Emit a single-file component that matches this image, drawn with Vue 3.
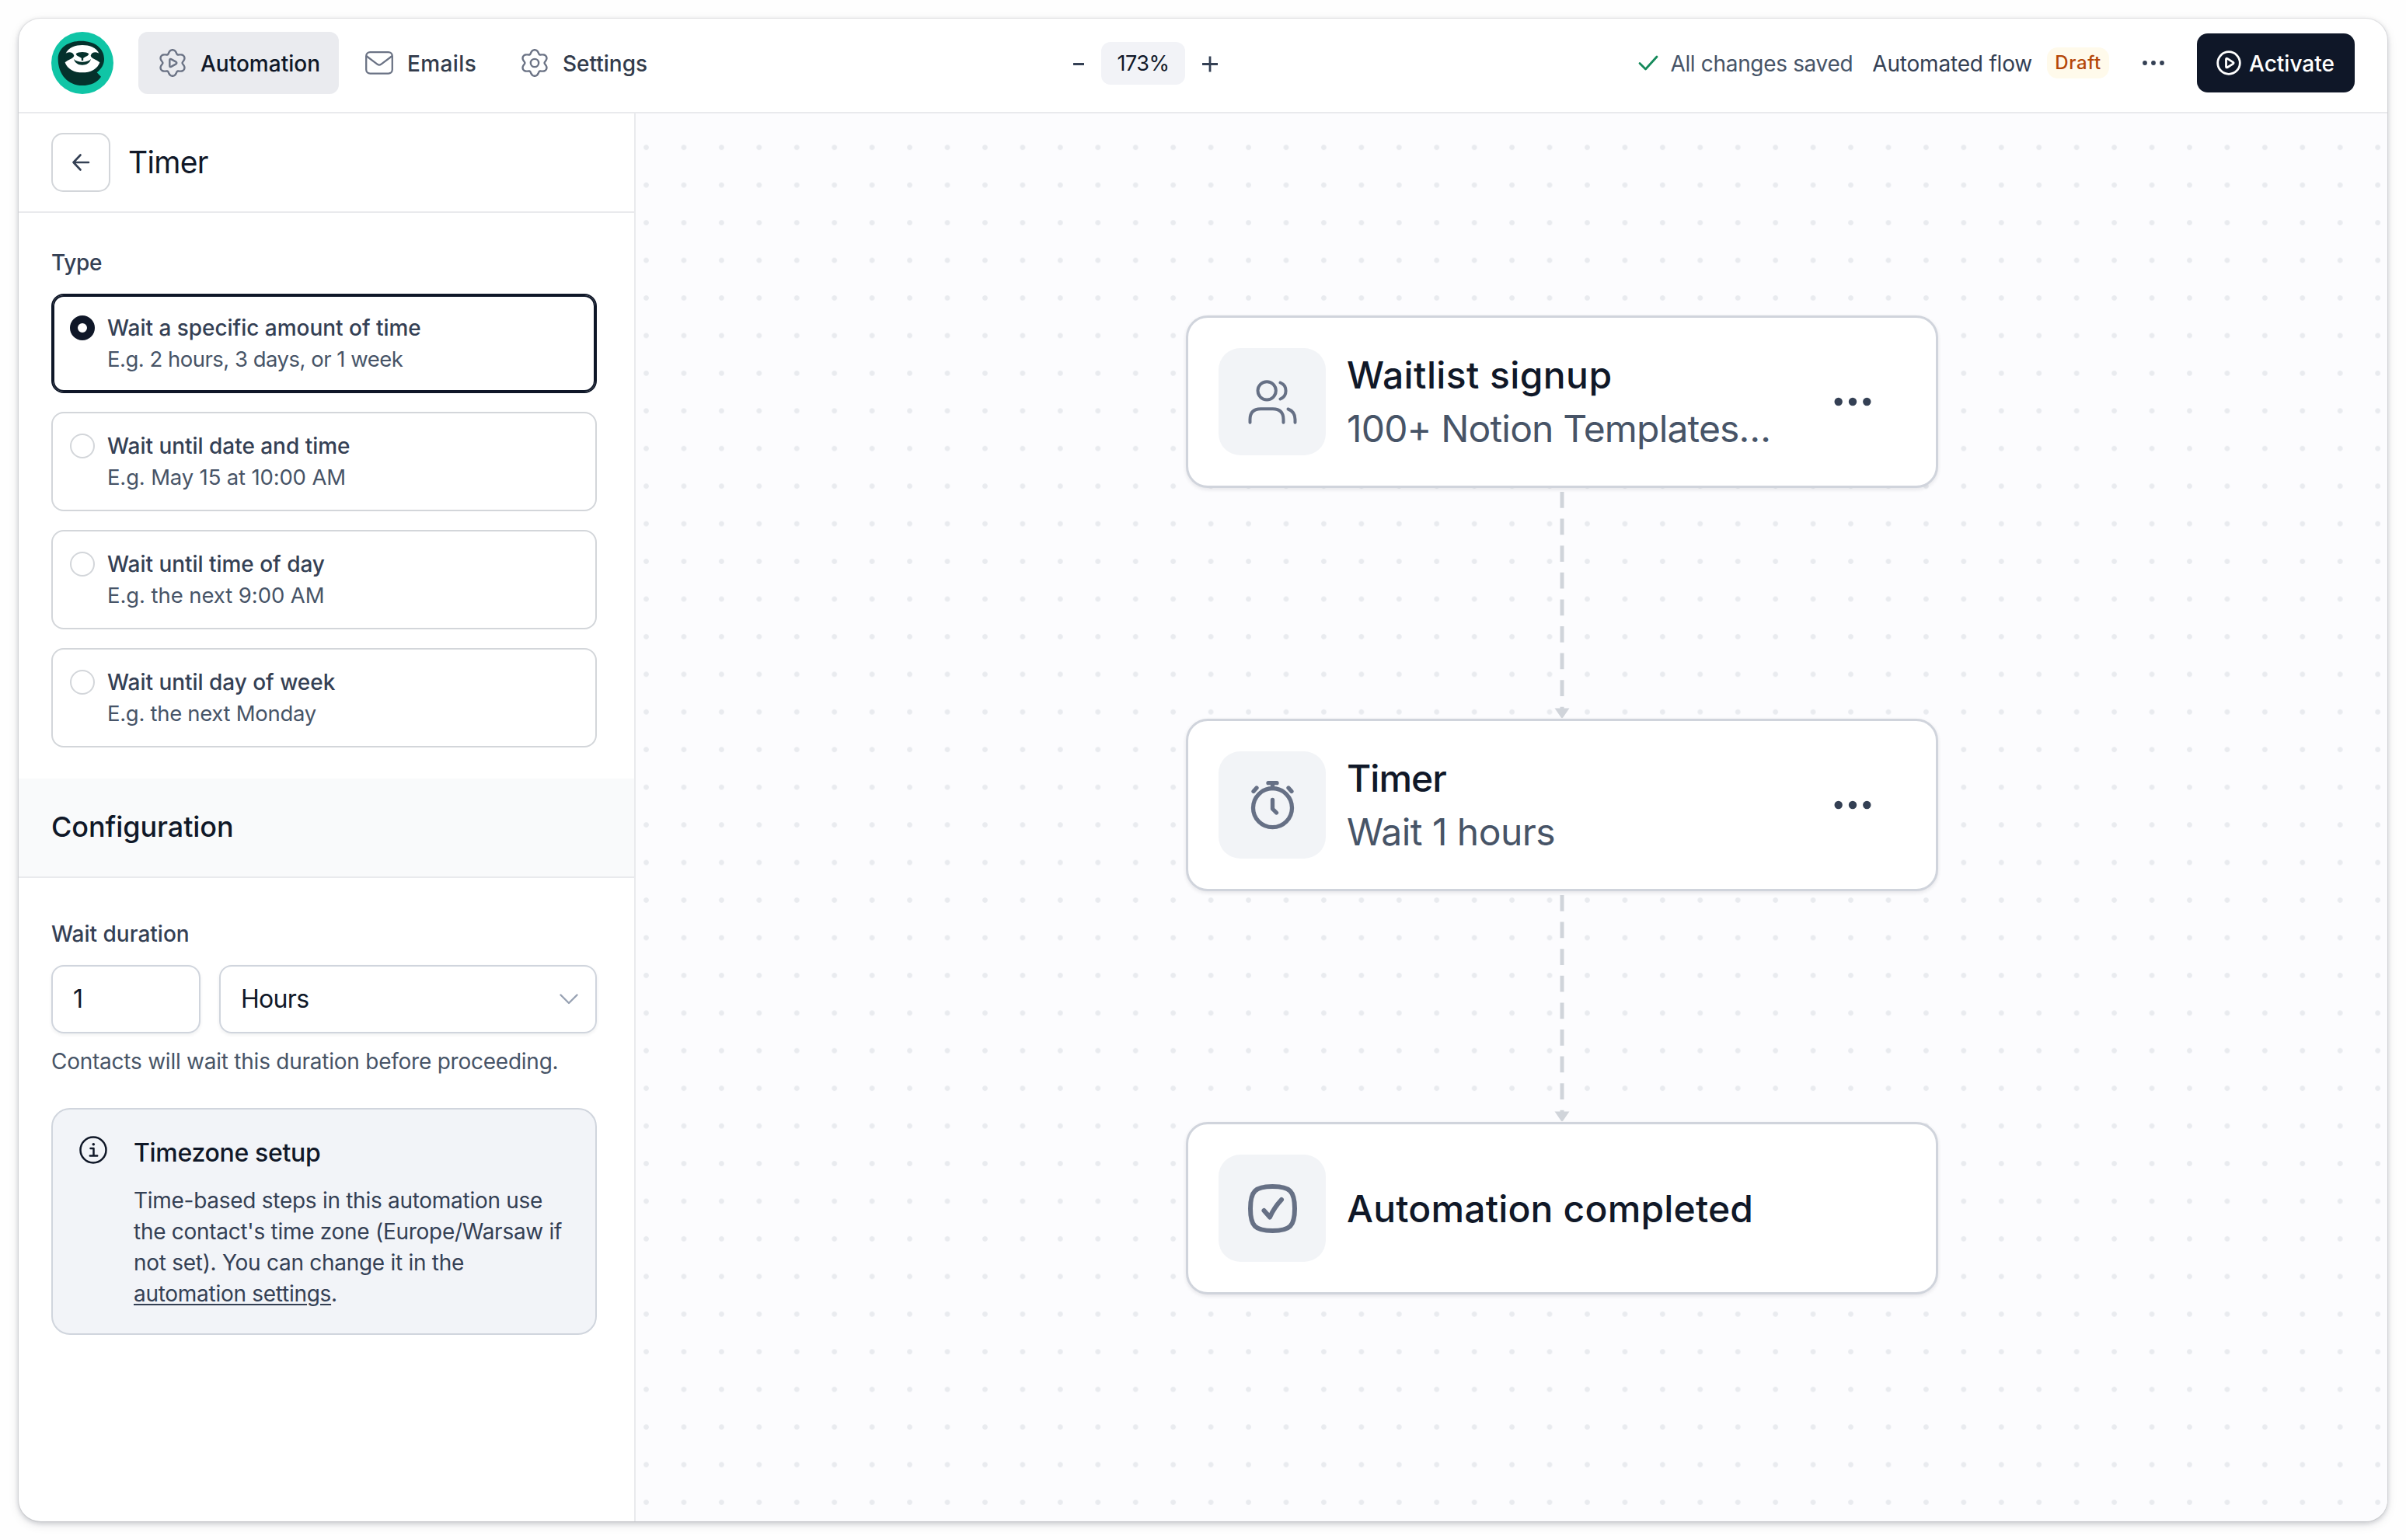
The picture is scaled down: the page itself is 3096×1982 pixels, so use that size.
<template>
  <div class="window">
    <header class="topbar">
      <div class="topbar-left">
        <svg class="logo" viewBox="0 0 240 240">
          <circle cx="120" cy="120" r="120" fill="#10c5a6" />
          <path
            d="M26 104C26 60 68 35 115 35C166 35 204 62 204 105C204 126 194 142 176 157L192 173C180 195 150 207 120 207C65 207 26 165 26 104Z"
            fill="#04312c"
          />
          <path
            d="M55 86C65 59 95 51 120 51C145 51 175 59 185 86L188 116C178 145 150 157 120 157C90 157 62 145 52 116Z"
            fill="#fff"
          />
          <path
            d="M48 90C60 75 84 75 88 92C85 104 70 103 50 120ZM192 90C180 75 156 75 152 92C155 104 170 103 190 120Z"
            fill="#04312c"
          />
          <path
            d="M95 85C104 76 136 76 145 85C143 95 129 96 123.500 102V111H116.500V102C111 96 97 95 95 85Z"
            fill="#04312c"
          />
          <path d="M87 105C101 120 139 120 153 105C149 121 135 128 120 128C105 128 91 121 87 105Z" fill="#04312c" />
        </svg>
        <nav class="tabs">
          <button class="tab tab-automation active">
            <svg class="tab-icon" viewBox="0 0 108 108">
              <path :d="gearPath" />
              <path d="M43 43v22q0 6 5.500 3.500l19-10.500q5-4 0-8l-19-10.500q-5.500-2.500-5.500 3.500Z" />
            </svg>
            <span>Automation</span>
          </button>
          <button class="tab tab-emails">
            <svg class="tab-icon mail" viewBox="0 0 36 36">
              <rect x="1.200" y="4.200" width="33.600" height="27.400" rx="5" />
              <path d="M2 9.500L15.800 19.800q2.200 1.500 4.400 0L34 9.500" />
            </svg>
            <span>Emails</span>
          </button>
          <button class="tab">
            <svg class="tab-icon" viewBox="0 0 108 108">
              <path :d="gearPath" />
              <circle cx="54" cy="54" r="15.500" />
            </svg>
            <span>Settings</span>
          </button>
        </nav>
      </div>

      <div class="zoom">
        <button class="zoom-btn zoom-out">
          <svg width="14" height="20" viewBox="0 0 14 20"><path d="M0 11.500h14" /></svg>
        </button>
        <div class="zoom-value"><span>{{ zoom }}%</span></div>
        <button class="zoom-btn zoom-in">
          <svg width="20" height="20" viewBox="0 0 20 20"><path d="M0 11.500h20M10 1.500v20" /></svg>
        </button>
      </div>

      <div class="topbar-right">
        <svg class="saved-icon" viewBox="0 0 26 20"><path d="M2 10.500L9.500 18L24 2" /></svg>
        <span class="saved">All changes saved</span>
        <span class="flow-name">Automated flow</span>
        <span class="badge">Draft</span>
        <button class="more">
          <svg width="30" height="8" viewBox="0 0 30 8">
            <circle cx="4" cy="4" r="2.900" />
            <circle cx="15" cy="4" r="2.900" />
            <circle cx="26" cy="4" r="2.900" />
          </svg>
        </button>
        <button class="activate">
          <svg viewBox="0 0 32 32">
            <circle cx="16" cy="16" r="14.300" />
            <path d="M12.500 11.300v9.400q0 1.800 1.600 1l7.400-4.600q1.300-1 0-2l-7.400-4.700q-1.600-.900-1.600.9Z" />
          </svg>
          <span>Activate</span>
        </button>
      </div>
    </header>

    <div class="body">
      <aside class="sidebar">
        <div class="sidebar-header">
          <button class="back">
            <svg viewBox="0 0 24 24"><path d="M22 12H2.500M11.500 2.500L2.500 12l9 9.500" /></svg>
          </button>
          <h1>Timer</h1>
        </div>

        <section class="type">
          <div class="label type-label">Type</div>
          <div class="options">
            <div
              v-for="opt in options"
              :key="opt.title"
              class="option"
              :class="{ selected: selected === opt.id }"
              @click="selected = opt.id"
            >
              <span class="radio"></span>
              <div>
                <div class="option-title">{{ opt.title }}</div>
                <div class="option-hint" :style="{ letterSpacing: opt.tracking + 'px' }">{{ opt.hint }}</div>
              </div>
            </div>
          </div>
        </section>

        <div class="section-title">Configuration</div>

        <section class="config">
          <div class="label">Wait duration</div>
          <div class="duration">
            <div class="field amount">{{ amount }}</div>
            <div class="field unit">
              <span>Hours</span>
              <svg viewBox="0 0 24 14"><path d="M1.500 1.500L12 12L22.500 1.500" /></svg>
            </div>
          </div>
          <p class="help">Contacts will wait this duration before proceeding.</p>

          <div class="alert">
            <svg class="alert-icon" viewBox="0 0 36 36">
              <circle cx="18" cy="18" r="16.500" />
              <path d="M14.500 16h4v9.500M13.800 25.500h9.400" />
              <circle class="dot" cx="18.300" cy="10.800" r="1.800" />
            </svg>
            <div class="alert-body">
              <div class="alert-title">Timezone setup</div>
              <p>
                Time-based steps in this automation use the contact's time zone (Europe/Warsaw if not set). You can
                change it in the <a>automation settings</a>.
              </p>
            </div>
          </div>
        </section>
      </aside>

      <main class="canvas">
        <template v-for="(node, i) in nodes" :key="node.title">
          <!-- dashed arrow coming from the previous node -->
          <svg v-if="i > 0" class="connector" width="20" height="297" viewBox="0 0 20 297">
            <path class="line" d="M10 5V290" />
            <path class="head" d="M0.500 283.500H19.500L11.200 295.500Q10 297 8.800 295.500Z" />
          </svg>
          <div class="node">
            <div class="node-icon">
              <svg v-if="node.icon === 'users'" viewBox="0 0 189 189" stroke-width="12">
                <circle cx="72.500" cy="50.500" r="35" />
                <path d="M124.500 19.500a34 34 0 0 1 0 63" />
                <path d="M7.500 173.500v-12q0-41 41-41h47q41 0 41 41v12" />
                <path d="M154.500 121.500q27 10 27 40v12" />
              </svg>
              <svg v-else-if="node.icon === 'timer'" viewBox="0 0 63 63" stroke-width="5.300">
                <circle cx="31.500" cy="34.700" r="25" />
                <path d="M26 2.700h11M31.500 2.700v7M31.500 24.500v11.500l5 5M7 13.500l4-4.500M56 13.500l-4-4.500" />
              </svg>
              <svg v-else viewBox="0 0 63 63" stroke-width="6">
                <path d="M3 31.500C3 9 9 3 31.500 3S60 9 60 31.500 54 60 31.500 60 3 54 3 31.500Z" />
                <path d="M20.500 34l7.500 8.500C31.500 34.500 36.500 27 43 20" />
              </svg>
            </div>
            <div class="node-text">
              <div class="node-title" :style="{ letterSpacing: node.titleTracking + 'px' }">{{ node.title }}</div>
              <div v-if="node.sub" class="node-sub" :style="{ letterSpacing: node.subTracking + 'px' }">
                {{ node.sub }}
              </div>
            </div>
            <button v-if="node.sub" class="node-menu">
              <svg width="48" height="12" viewBox="0 0 48 12">
                <circle cx="5.700" cy="6" r="5.200" />
                <circle cx="24" cy="6" r="5.200" />
                <circle cx="42.300" cy="6" r="5.200" />
              </svg>
            </button>
          </div>
        </template>
      </main>
    </div>
  </div>
</template>

<script setup>
import { ref } from 'vue'

const zoom = ref(173)
const amount = ref(1)
const selected = ref('amount')

const options = [
  { id: 'amount', title: 'Wait a specific amount of time', hint: 'E.g. 2 hours, 3 days, or 1 week', tracking: -0.5 },
  { id: 'date', title: 'Wait until date and time', hint: 'E.g. May 15 at 10:00 AM', tracking: -0.16 },
  { id: 'time', title: 'Wait until time of day', hint: 'E.g. the next 9:00 AM', tracking: -0.08 },
  { id: 'day', title: 'Wait until day of week', hint: 'E.g. the next Monday', tracking: -0.3 }
]

const nodes = [
  { icon: 'users', title: 'Waitlist signup', titleTracking: 0.39, sub: '100+ Notion Templates…', subTracking: -0.83 },
  { icon: 'timer', title: 'Timer', titleTracking: -1, sub: 'Wait 1 hours', subTracking: -0.55 },
  { icon: 'check', title: 'Automation completed', titleTracking: 0.17 }
]

// six-lobed gear outline, centered in a 108x108 box
function buildGear() {
  const pts = []
  for (let a = 0; a < 360; a += 3) {
    const t = (a * Math.PI) / 180
    const r = 44.5 - 6.6 * Math.cos(6 * t) - 0.8 * Math.cos(12 * t)
    pts.push(`${(54 + r * 1.02 * Math.cos(t)).toFixed(1)} ${(54 + r * Math.sin(t)).toFixed(1)}`)
  }
  return `M${pts.join('L')}Z`
}
const gearPath = buildGear()
</script>

<style>
body {
  background: #fefefe;
}
</style>

<style scoped>
.window {
  box-sizing: border-box;
  width: 3048px;
  height: 1934px;
  margin: 24px;
  display: flex;
  flex-direction: column;
  overflow: hidden;
  border-radius: 28px;
  background: #fff;
  box-shadow: 0 0 0 1px rgba(16, 24, 40, 0.06), 0 2px 6px rgba(16, 24, 40, 0.2), 0 4px 14px rgba(16, 24, 40, 0.1);
  font-family: Inter, "Liberation Sans", sans-serif;
  font-size: 28px;
  line-height: 40px;
  color: #344054;
}

button {
  border: none;
  padding: 0;
  background: none;
  font: inherit;
  color: inherit;
  cursor: pointer;
}

svg {
  display: block;
  flex: none;
  fill: none;
  stroke: currentColor;
  stroke-linecap: round;
  stroke-linejoin: round;
}

/* top bar */
.topbar {
  box-sizing: border-box;
  flex: none;
  height: 122px;
  padding: 0 42px 6px;
  display: grid;
  grid-template-columns: 1303px auto 1fr;
  align-items: center;
  border-bottom: 2px solid #e9eaed;
}

.topbar span {
  padding-top: 1px;
}

.topbar-left {
  display: flex;
  align-items: center;
  gap: 32px;
}

.logo {
  width: 80px;
  height: 80px;
  stroke: none;
}

.tabs {
  display: flex;
  gap: 8px;
}

.tab {
  box-sizing: border-box;
  height: 80px;
  padding: 0 26px;
  display: flex;
  align-items: center;
  gap: 18px;
  border-radius: 12px;
  font-weight: 500;
  color: #323b4b;
}

.tab-automation {
  width: 258px;
}

.tab-emails {
  width: 192px;
  letter-spacing: 0.4px;
}

.tab.active {
  background: #eaebef;
  color: #101828;
}

.tab-icon {
  width: 36px;
  height: 36px;
  color: #6b7385;
  stroke-width: 7.2;
}

.tab-icon.mail {
  stroke-width: 2.3;
}

.zoom {
  display: flex;
  align-items: center;
  gap: 10px;
}

.zoom-btn {
  height: 54px;
  display: flex;
  align-items: center;
  justify-content: center;
}

.zoom-btn svg {
  overflow: visible;
  stroke-width: 2.8;
  stroke-linecap: butt;
}

.zoom-out {
  width: 38px;
}

.zoom-in {
  width: 43px;
}

.zoom-value {
  width: 108px;
  height: 55px;
  display: flex;
  align-items: center;
  justify-content: center;
  border-radius: 12px;
  background: #f2f3f7;
  font-size: 27px;
  letter-spacing: -0.56px;
  color: #101828;
}

.topbar-right {
  display: flex;
  align-items: center;
  justify-content: flex-end;
  white-space: nowrap;
}

.saved-icon {
  width: 26px;
  height: 20px;
  margin-right: 15px;
  stroke: #158a5b;
  stroke-width: 2.8;
}

.saved {
  margin-right: 25px;
  letter-spacing: -0.33px;
  color: #475467;
}

.flow-name {
  margin-right: 19px;
  letter-spacing: -0.19px;
}

.badge {
  box-sizing: border-box;
  width: 80px;
  height: 40px;
  margin-right: 27px;
  border-radius: 14px;
  background: #fffaeb;
  font-size: 24px;
  font-weight: 500;
  line-height: 38px;
  letter-spacing: 0.6px;
  text-align: center;
  color: #b54708;
}

.more {
  width: 60px;
  height: 60px;
  margin-right: 26px;
  display: flex;
  align-items: center;
  justify-content: center;
}

.more svg,
.node-menu svg {
  fill: #344054;
  stroke: none;
}

.activate {
  width: 203px;
  height: 76px;
  padding-left: 25px;
  display: flex;
  align-items: center;
  gap: 10px;
  border-radius: 14px;
  background: #0f1728;
  font-weight: 500;
  color: #fff;
}

.activate svg {
  width: 32px;
  height: 32px;
  stroke-width: 2.8;
}

/* sidebar */
.body {
  flex: 1;
  min-height: 0;
  display: flex;
}

.sidebar {
  box-sizing: border-box;
  flex: none;
  width: 794px;
  border-right: 2px solid #e9eaed;
}

.sidebar-header {
  box-sizing: border-box;
  height: 128px;
  padding: 0 42px;
  display: flex;
  align-items: center;
  gap: 23px;
  border-bottom: 2px solid #e9eaed;
}

.back {
  box-sizing: border-box;
  width: 76px;
  height: 76px;
  display: flex;
  align-items: center;
  justify-content: center;
  border: 2px solid #d3d6da;
  border-radius: 15px;
}

.back svg {
  width: 24px;
  height: 24px;
  stroke-width: 2.6;
}

h1 {
  margin: 0;
  font-size: 39px;
  font-weight: 400;
  line-height: 48px;
  letter-spacing: -0.7px;
  color: #101828;
}

.type {
  padding: 44px 48px 40px 42px;
}

.label {
  margin-bottom: 20px;
  font-weight: 500;
}

.type-label {
  letter-spacing: -0.3px;
}

.options {
  display: flex;
  flex-direction: column;
  gap: 24px;
}

.option {
  box-sizing: border-box;
  height: 128px;
  padding: 22px;
  display: flex;
  gap: 16px;
  border: 2px solid #d3d6da;
  border-radius: 16px;
}

.option.selected {
  border-color: #0f1728;
  box-shadow: inset 0 0 0 2px #0f1728;
}

.radio {
  box-sizing: border-box;
  flex: none;
  width: 32px;
  height: 32px;
  margin-top: 4px;
  border: 2px solid #d3d6da;
  border-radius: 50%;
}

.selected .radio {
  border: 10px solid #0f1728;
}

.option-title {
  font-weight: 500;
  letter-spacing: -0.03px;
}

.option-hint {
  font-size: 27.5px;
  color: #475467;
}

.section-title {
  box-sizing: border-box;
  height: 128px;
  padding: 0 42px 2px;
  border-bottom: 2px solid #e9eaed;
  background: #f9fafb;
  font-size: 36px;
  font-weight: 500;
  line-height: 124px;
  letter-spacing: -0.07px;
  color: #101828;
}

.config {
  padding: 52px 48px 0 42px;
}

.duration {
  display: flex;
  gap: 24px;
}

.field {
  box-sizing: border-box;
  height: 88px;
  padding: 0 26px;
  display: flex;
  align-items: center;
  border: 2px solid #d0d5dd;
  border-radius: 16px;
  box-shadow: 0 2px 4px rgba(16, 24, 40, 0.07);
  font-size: 32px;
  letter-spacing: -0.7px;
  color: #101828;
}

.amount {
  width: 192px;
}

.unit {
  flex: 1;
  justify-content: space-between;
  padding-right: 22px;
}

.unit svg {
  width: 24px;
  height: 14px;
  color: #98a2b3;
  stroke-width: 2.4;
}

.help {
  margin: 16px 0 40px;
  letter-spacing: -0.24px;
  white-space: nowrap;
  color: #475467;
}

.alert {
  box-sizing: border-box;
  height: 292px;
  padding: 36px 32px 31px 34px;
  display: flex;
  gap: 34px;
  border: 2px solid #d0d5dd;
  border-radius: 24px;
  background: #f2f4f8;
}

.alert-icon {
  width: 36px;
  height: 36px;
  margin-top: -2px;
  color: #101828;
  stroke-width: 2.5;
}

.alert-icon .dot {
  fill: currentColor;
  stroke: none;
}

.alert-title {
  margin-bottom: 21px;
  font-size: 32px;
  font-weight: 500;
  letter-spacing: -0.31px;
  color: #101828;
}

.alert p {
  margin: 0;
  letter-spacing: -0.28px;
}

.alert a {
  text-decoration: underline;
  text-decoration-thickness: 2px;
  text-underline-offset: 3px;
}

/* flow canvas */
.canvas {
  box-sizing: border-box;
  flex: 1;
  padding: 260px 0 0 708px;
  background: #fcfcfe radial-gradient(circle, #e9ebef 2.900px, transparent 3.800px) -10.700px 19.500px / 48.440px 48.440px;
}

.node {
  box-sizing: border-box;
  width: 968px;
  height: 222px;
  padding: 39px;
  display: flex;
  align-items: center;
  border: 3px solid #d0d4dc;
  border-radius: 28px;
  background: #fff;
  box-shadow: 0 2px 5px rgba(16, 24, 40, 0.1);
}

.node-icon {
  flex: none;
  width: 138px;
  height: 138px;
  display: flex;
  align-items: center;
  justify-content: center;
  border-radius: 28px;
  background: #f2f4f7;
  color: #667085;
}

.node-icon svg {
  width: 63px;
  height: 63px;
}

.node-text {
  flex: 1;
  margin-left: 27px;
  font-size: 48px;
  line-height: 69px;
  white-space: nowrap;
}

.node-title {
  font-weight: 500;
  color: #101828;
}

.node-sub {
  color: #475467;
}

.node-menu {
  width: 136px;
  height: 80px;
  display: flex;
  align-items: center;
  justify-content: center;
}

.connector {
  margin-left: 474px;
}

.connector .line {
  stroke: #d0d4da;
  stroke-width: 5;
  stroke-linecap: butt;
  stroke-dasharray: 20.760 13.840;
}

.connector .head {
  fill: #d0d4da;
  stroke: none;
}
</style>
